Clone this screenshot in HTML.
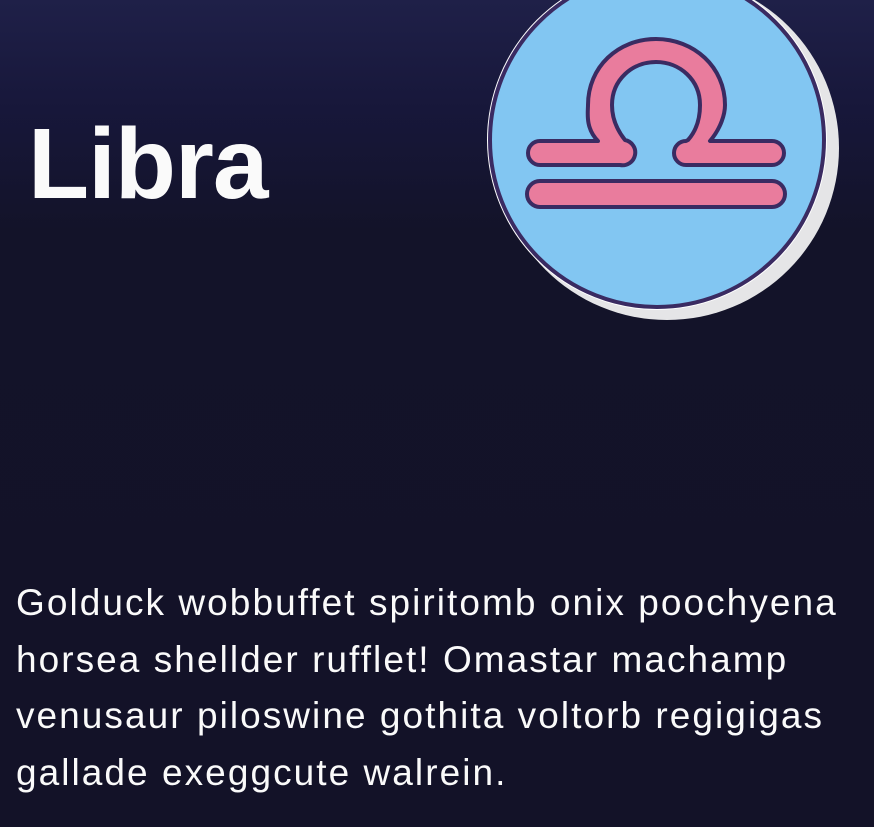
<!DOCTYPE html>
<html><head><meta charset="utf-8"><style>
html,body{margin:0;padding:0;}
body{width:874px;height:827px;overflow:hidden;position:relative;
background:linear-gradient(180deg,#1f2048 0px,#17173a 110px,#131329 230px,#131228 827px);
font-family:"Liberation Sans",sans-serif;color:#fafafa;}
h1{position:absolute;left:28px;top:99px;margin:0;font-size:100px;font-weight:bold;letter-spacing:-1px;line-height:130px;}
p{position:absolute;left:16px;top:575px;margin:0;font-size:37px;line-height:56.5px;letter-spacing:2.05px;white-space:nowrap;}
svg{position:absolute;left:0;top:0;}
</style></head><body>
<svg width="874" height="827" viewBox="0 0 874 827">
<circle cx="667" cy="148" r="172" fill="#e5e5e7"/>
<circle cx="657" cy="140" r="170" fill="#fff"/>
<circle cx="657" cy="140" r="167" fill="#82c6f2" stroke="#3a2b62" stroke-width="4"/>
<g stroke="#3a2b62" stroke-width="4" fill="#e97c9d" stroke-linejoin="round">
<path d="M540 141 H598 C585 128 588 112 588 105 C588 67 618 39 656 39 C694 39 725 67 725 105 C725 114 721 128 710 141 H772 A12 12 0 0 1 772 165 H686 A12 12 0 0 1 686 141 L688 140 C697 130 700 118 700 105 C700 80 680 62 656 62 C632 62 612 80 612 105 C612 118 617 130 625 140 A12 12 0 0 1 620 165 H540 A12 12 0 0 1 540 141 Z"/>
<path d="M540 181 H772 A13 13 0 0 1 772 207 H540 A13 13 0 0 1 540 181 Z"/>
</g>
</svg>
<h1>Libra</h1>
<p>Golduck wobbuffet spiritomb onix poochyena<br>horsea shellder rufflet! Omastar machamp<br>venusaur piloswine gothita voltorb regigigas<br>gallade exeggcute walrein.</p>
</body></html>
